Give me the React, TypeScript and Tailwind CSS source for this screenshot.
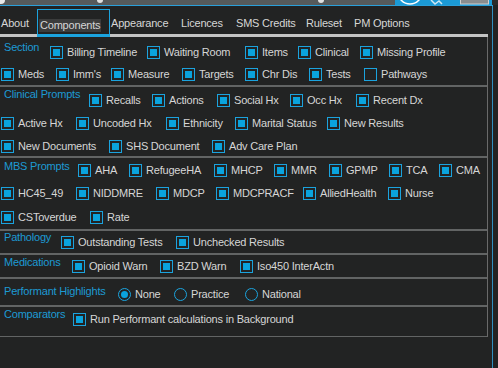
import React from "react";

const Check = ({ checked = true }: { checked?: boolean }) => (
  <span className="w-[13px] h-[13px] border border-[#1ba3de] flex items-center justify-center shrink-0">
    {checked && <span className="w-[7px] h-[7px] bg-[#0aa3dd]" />}
  </span>
);

const Radio = ({ checked = false }: { checked?: boolean }) => (
  <span className="w-[13px] h-[13px] rounded-full border border-[#1ba3de] flex items-center justify-center shrink-0">
    {checked && <span className="w-[7px] h-[7px] rounded-full bg-[#0aa3dd]" />}
  </span>
);

const Item = ({ label, w = "", checked = true, radio = false }: { label: string; w?: string; checked?: boolean; radio?: boolean }) => (
  <div className={`flex items-center shrink-0 ${w}`}>
    {radio ? <Radio checked={checked} /> : <Check checked={checked} />}
    <span className="ml-[4px] whitespace-nowrap leading-[13px]">{label}</span>
  </div>
);

const Label = ({ text, w, mt }: { text: string; w: string; mt: string }) => (
  <div className={`self-start shrink-0 pl-[4px] h-[13px] leading-[13px] whitespace-nowrap text-[#1d9ad3] ${w} ${mt}`}>{text}</div>
);

export default function App() {
  return (
    <div className="w-[498px] h-[368px] overflow-hidden bg-[#222323] text-[#d6d6d6] text-[11px] tracking-[-0.2px] font-['Liberation_Sans',Arial,sans-serif] flex flex-col">
      {/* window behind (top strip) */}
      <div className="h-[5px] flex shrink-0 bg-[#2a2b2b]">
        <div className="w-[395px] bg-[#565a5b] relative overflow-hidden">
          <span className="absolute left-[-3px] top-[-4px] w-[8px] h-[8px] rounded-full bg-[#e8e8e8]" />
          <span className="absolute left-[97px] top-[-4px] w-[6px] h-[7px] rounded-full bg-[#e0e0e0]" />
          <span className="absolute left-[318px] top-[-4px] w-[6px] h-[7px] rounded-full bg-[#e0e0e0]" />
        </div>
        <div className="w-[97px] bg-[#1b9ad6] relative overflow-hidden">
          <svg width="97" height="5" className="absolute left-0 top-0">
            <circle cx="15" cy="-8" r="12" fill="none" stroke="#ffffff" strokeWidth="1.5" />
            <path d="M36 0 L40 4 L44 1 L47 4" fill="none" stroke="#cfe8f5" strokeWidth="1.5" />
            <rect x="65.5" y="-3" width="28" height="7" fill="#8a8d8f" stroke="#cfcfcf" />
          </svg>
        </div>
      </div>
      <div className="h-[1px] w-[493px] bg-[#2aa0da] shrink-0" />

      <div className="flex flex-1">
        <div className="w-[492px] flex flex-col">
          {/* Tab bar */}
          <div className="h-[28px] flex items-start shrink-0">
            <div className="w-[37px] pl-[1px] mt-[11px] leading-[13px]">About</div>
            <div className="w-[73px] h-[25px] mt-[3px] border border-b-0 border-[#1ba3de] pt-[7px] pl-[1px]">
              <span className="inline-block bg-[#3b3c3c] px-[1px] leading-[13px]">Components</span>
            </div>
            <div className="w-[70px] pl-[1px] mt-[11px] leading-[13px]">Appearance</div>
            <div className="w-[55px] pl-[1px] mt-[11px] leading-[13px]">Licences</div>
            <div className="w-[70px] pl-[1px] mt-[11px] leading-[13px]">SMS Credits</div>
            <div className="w-[48px] pl-[1px] mt-[11px] leading-[13px]">Ruleset</div>
            <div className="pl-[1px] mt-[11px] leading-[13px] whitespace-nowrap">PM Options</div>
          </div>
          <div className="h-[3px] w-[488px] flex shrink-0">
            <div className="w-[37px] bg-[#c4c4c4]" />
            <div className="w-[73px] bg-[#1ba3de]" />
            <div className="flex-1 bg-[#c4c4c4]" />
          </div>

          <div className="w-[488px] border-r border-[#6a6a6a] flex flex-col">
            {/* Section */}
            <div className="h-[50px] border-b-2 border-[#626464] pt-[9px] flex flex-col gap-[9px]">
              <div className="flex items-center h-[13px]">
                <Label text="Section" w="w-[50px]" mt="-mt-[5px]" />
                <Item label="Billing Timeline" w="w-[97px]" />
                <Item label="Waiting Room" w="w-[98px]" />
                <Item label="Items" w="w-[53px]" />
                <Item label="Clinical" w="w-[62px]" />
                <Item label="Missing Profile" />
              </div>
              <div className="flex items-center h-[13px] pl-[1px]">
                <Item label="Meds" w="w-[55px]" />
                <Item label="Imm's" w="w-[55px]" />
                <Item label="Measure" w="w-[71px]" />
                <Item label="Targets" w="w-[63px]" />
                <Item label="Chr Dis" w="w-[64px]" />
                <Item label="Tests" w="w-[55px]" />
                <Item label="Pathways" checked={false} />
              </div>
            </div>

            {/* Clinical Prompts */}
            <div className="h-[71px] border-b-2 border-[#626464] pt-[7px] flex flex-col gap-[10px]">
              <div className="flex items-center h-[13px]">
                <Label text="Clinical Prompts" w="w-[89px]" mt="-mt-[6px]" />
                <Item label="Recalls" w="w-[63px]" />
                <Item label="Actions" w="w-[65px]" />
                <Item label="Social Hx" w="w-[73px]" />
                <Item label="Occ Hx" w="w-[66px]" />
                <Item label="Recent Dx" />
              </div>
              <div className="flex items-center h-[13px] pl-[1px]">
                <Item label="Active Hx" w="w-[75px]" />
                <Item label="Uncoded Hx" w="w-[90px]" />
                <Item label="Ethnicity" w="w-[69px]" />
                <Item label="Marital Status" w="w-[92px]" />
                <Item label="New Results" />
              </div>
              <div className="flex items-center h-[13px] pl-[1px]">
                <Item label="New Documents" w="w-[108px]" />
                <Item label="SHS Document" w="w-[103px]" />
                <Item label="Adv Care Plan" />
              </div>
            </div>

            {/* MBS Prompts */}
            <div className="h-[73px] border-b-2 border-[#626464] pt-[6px] flex flex-col gap-[10px]">
              <div className="flex items-center h-[13px]">
                <Label text="MBS Prompts" w="w-[78px]" mt="-mt-[4px]" />
                <Item label="AHA" w="w-[51px]" />
                <Item label="RefugeeHA" w="w-[85px]" />
                <Item label="MHCP" w="w-[60px]" />
                <Item label="MMR" w="w-[55px]" />
                <Item label="GPMP" w="w-[60px]" />
                <Item label="TCA" w="w-[50px]" />
                <Item label="CMA" />
              </div>
              <div className="flex items-center h-[13px] pl-[1px]">
                <Item label="HC45_49" w="w-[75px]" />
                <Item label="NIDDMRE" w="w-[80px]" />
                <Item label="MDCP" w="w-[60px]" />
                <Item label="MDCPRACF" w="w-[87px]" />
                <Item label="AlliedHealth" w="w-[85px]" />
                <Item label="Nurse" />
              </div>
              <div className="flex items-center h-[13px] pl-[1px] mt-[1px]">
                <Item label="CSToverdue" w="w-[89px]" />
                <Item label="Rate" />
              </div>
            </div>

            {/* Pathology */}
            <div className="h-[24px] border-b-2 border-[#626464] pt-[5px] flex flex-col">
              <div className="flex items-center h-[13px]">
                <Label text="Pathology" w="w-[61px]" mt="-mt-[5px]" />
                <Item label="Outstanding Tests" w="w-[115px]" />
                <Item label="Unchecked Results" />
              </div>
            </div>

            {/* Medications */}
            <div className="h-[24px] border-b-2 border-[#626464] pt-[5px] flex flex-col">
              <div className="flex items-center h-[13px]">
                <Label text="Medications" w="w-[72px]" mt="-mt-[4px]" />
                <Item label="Opioid Warn" w="w-[88px]" />
                <Item label="BZD Warn" w="w-[80px]" />
                <Item label="Iso450 InterActn" />
              </div>
            </div>

            {/* Performant Highlights */}
            <div className="h-[28px] border-b-2 border-[#626464] pt-[9px] flex flex-col">
              <div className="flex items-center h-[13px]">
                <Label text="Performant Highlights" w="w-[118px]" mt="-mt-[3px]" />
                <Item label="None" w="w-[56px]" radio checked />
                <Item label="Practice" w="w-[71px]" radio checked={false} />
                <Item label="National" radio checked={false} />
              </div>
            </div>

            {/* Comparators */}
            <div className="h-[30px] border-b border-[#626464] pt-[6px] flex flex-col">
              <div className="flex items-center h-[13px]">
                <Label text="Comparators" w="w-[73px]" mt="-mt-[5px]" />
                <Item label="Run Performant calculations in Background" />
              </div>
            </div>
          </div>
        </div>
        <div className="w-[1px] bg-[#2f8fbf]" />
        <div className="flex-1" />
      </div>
    </div>
  );
}
